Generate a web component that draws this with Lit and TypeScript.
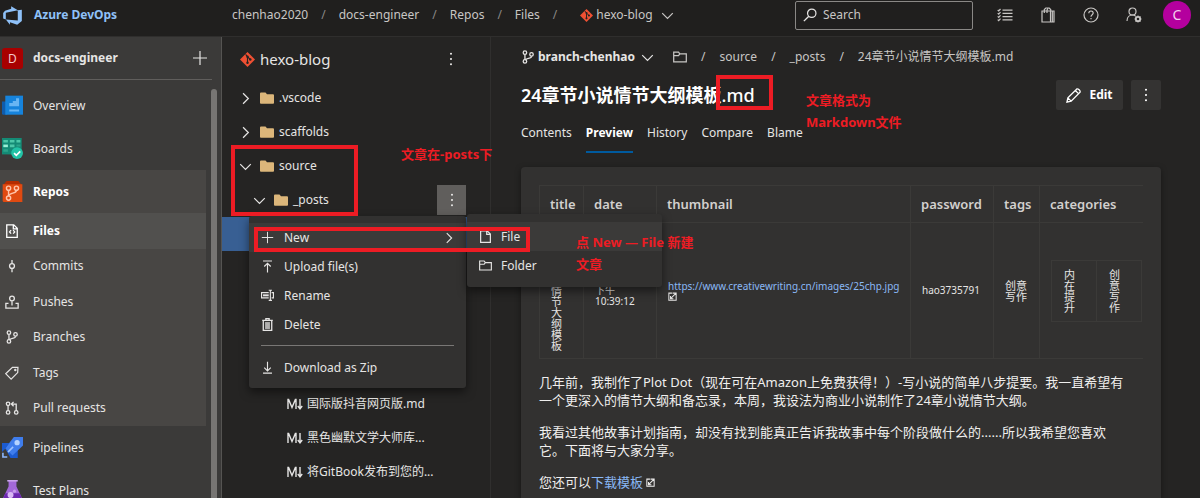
import { LitElement, html, css, svg } from "lit";
import { customElement } from "lit/decorators.js";
import { classMap } from "lit/directives/class-map.js";

const glyphs: Record<string, any> = {
  devops: svg`<path transform="scale(.889)" fill="#8fc1f8" stroke="none" d="M17 4v9.740l-4 3.280-6.200-2.260V17l-3.510-4.590 10.230.8V4.440zM13.590 4.490 7.850 1v2.290L2.580 4.840 1 6.870v4.610l2.260 1V6.570z"/>`,
  plus: svg`<path d="M8 1v14M1 8h14"/>`,
  chevronDown: svg`<path stroke-width="1.5" d="m1.5 5 6.500 6.500L14.500 5"/>`,
  chevronRight: svg`<path stroke-width="1.5" d="M5 1.500 11.500 8 5 14.500"/>`,
  dots: svg`<g fill="currentColor" stroke="none"><circle cx="8" cy="2" r="1.2"/><circle cx="8" cy="8" r="1.2"/><circle cx="8" cy="14" r="1.2"/></g>`,
  git: svg`<path fill="#f05033" stroke="none" d="M8 0 16 8 8 16 0 8z"/><path stroke="#252423" stroke-width="1.2" d="M6 2.5 8 5v6.500M8 5l3 3"/><g fill="#252423" stroke="none"><circle cx="8" cy="5" r="1.3"/><circle cx="8" cy="11.5" r="1.3"/><circle cx="11" cy="8" r="1.3"/></g>`,
  folderFill: svg`<path fill="#dcb67a" stroke="none" d="M1 3.500Q1 2.500 2 2.500h4.500L8 4.300h6q1 0 1 1V13q0 .8-1 .8H2q-1 0-1-.8z"/>`,
  folder: svg`<path stroke-width="1.4" d="M.8 2.500h5.500l1.500 2h7.400v9H.8zM.8 6.500h5.500l1.500-2"/>`,
  search: svg`<circle cx="10" cy="6" r="4.8" stroke-width="1.4"/><path stroke-width="1.6" d="M6.600 9.400 1 15"/>`,
  list: svg`<path d="M5.500 3.200H15.500M5.500 6.400H15.500M5.500 9.600H15.500M5.500 12.800H15.500M.7 3l1 1L3.500 2M.7 6.200l1 1 1.800-2M.7 9.400l1 1 1.800-2M.7 12.600l1 1 1.800-2"/>`,
  bag: svg`<path d="M2 4h8.500v11H2zM10.500 4h3.500v11h-3.500M4.300 6V2.500l1.500-1.500h3.400l1.500 1.500V4M7 6V3l1-1.500M12.300 4v11"/>`,
  help: svg`<circle cx="8" cy="8" r="7"/><path d="M5.800 6.300c0-3 4.400-3 4.400-.2C10.200 7.800 8 7.800 8 9.800M8 11v1.300"/>`,
  userGear: svg`<circle cx="6.500" cy="4.500" r="3.500"/><path d="M1 14c0-4 2.800-6 5.500-6 1.300 0 2.200.3 3 .9"/><circle cx="12" cy="12" r="2.200" stroke-width="1.8"/><path stroke-width="1.1" d="M12 8.500v1M12 14.500v1M8.500 12h1M14.500 12h1M9.500 9.500l.8.8M13.700 13.700l.8.8M9.500 14.500l.8-.8M13.700 10.300l.8-.8"/>`,
  overview: svg`<path fill="#0f5cad" stroke="none" d="M0 5h4v10H1q-1 0-1-1z"/><path fill="#1683dc" stroke="none" d="M2.500.5H16V15H2.500z"/><path fill="#69b5f3" stroke="none" d="M5.500 6h2.700V4.500h2.500V2.500H13v6H5.500zM5.500 11h7.500v1.500H5.500z"/>`,
  boards: svg`<path fill="#148a75" stroke="none" d="M0 0h15v12.500H0z"/><path fill="#4cc7a8" stroke="none" d="M1 1.500h3.500v2H1zM6 1.500h3.500v2H6zM11 1.500h3v2h-3zM6 5h3.500v2H6z"/><path fill="#9af0d6" stroke="none" d="M1 5h3.500v2H1z"/><path fill="#2ba48a" stroke="none" d="M1 8.500h3.500v2H1zM11 5h3v1.500h-3z"/><circle cx="11.500" cy="11.500" r="4.500" fill="#22c3a6" stroke="none"/><path stroke="#fff" stroke-width="1.3" d="m9.200 11.500 1.700 1.700 3-3"/>`,
  repos: svg`<path fill="#b52c00" stroke="none" d="M3.500 0h9L15 3H1z"/><path fill="#e04a11" stroke="none" d="M.5 2.500h15V16H1.500q-1 0-1-1z"/><g stroke="#ffc4aa" stroke-width="1.1"><circle cx="5" cy="5.500" r="1.6"/><circle cx="11" cy="5.500" r="1.6"/><circle cx="5" cy="13" r="1.6"/><path d="M5 7v4.500M11 7c0 3-5 1.500-6 4.500"/></g>`,
  fileCode: svg`<path stroke-width="1.5" d="M2 1h8l4 4v10.200H2zM9.500 1v4.500h4.500M7 7 5.200 9 7 11M9.300 7l1.800 2-1.800 2"/>`,
  commit: svg`<circle cx="8" cy="8" r="2.8" stroke-width="1.5"/><path stroke-width="1.5" d="M8 1v4M8 11v4"/>`,
  push: svg`<circle cx="8" cy="4" r="2.7" stroke-width="1.5"/><path stroke-width="1.5" d="M8 7v5M4 9.500H1v5.500h14v-5.500h-3"/>`,
  branch: svg`<g stroke-width="1.5"><circle cx="4.500" cy="3" r="2"/><circle cx="4.500" cy="13" r="2"/><circle cx="12" cy="5" r="2"/><path d="M4.500 5v6M12 7c0 3-5 2-7 4.200"/></g>`,
  tag: svg`<path stroke-width="1.4" d="M8.500 1.500H14.800L14.500 7.500 7 15 .8 8.800z"/><circle cx="11.800" cy="4.500" r=".8"/>`,
  pull: svg`<g stroke-width="1.5"><circle cx="3.500" cy="3.200" r="2"/><circle cx="3.500" cy="13" r="2"/><circle cx="12.800" cy="13" r="2"/><path d="M3.500 5.200V11M12.800 11V3.500H7.500M9.800 1 7.300 3.500 9.800 6"/></g>`,
  pipelines: svg`<path fill="#1c5bd0" stroke="none" d="M0 4.500h6l6 5.500v6H6.500z"/><path fill="#3f7dec" stroke="none" d="M9 0h7v6.500L8 14 2.500 8.500z"/><path fill="#1c5bd0" stroke="none" d="M0 4.500h5.500L2.500 9 0 11.500z"/><circle cx="11.500" cy="4.300" r="2" fill="#b5d3ff" stroke="none"/><path stroke="#9fc4ff" d="M8.500 7.500 4.500 11.500"/><path stroke="#8db8ff" stroke-width="1.2" d="M.7 12v3.300H4"/>`,
  flask: svg`<path fill="#a368d8" stroke="none" d="M5 0h6v5l5 10.500H0L5 5z"/><path fill="#6d28b0" stroke="none" d="M2.500 10h11l2.500 6H0z"/><path stroke="#c9a3ec" stroke-width="1.2" d="M4 .6h8"/><circle cx="6.500" cy="11.500" r="2.3" fill="#d9b8f5" stroke="none"/><circle cx="9.500" cy="8.500" r="1.2" fill="#c79bec" stroke="none"/>`,
  upload: svg`<path stroke-width="1.4" d="M2.500 1.200h11M8 15.500V4M4 8l4-4 4 4"/>`,
  rename: svg`<path stroke-width="1.4" d="M9.500 4.500H.7v6.500h8.800M13 4.500h2.300v6.500H13M9.500 1.500h4M9.500 14h4M11.500 1.500V14"/><path stroke-width="2.4" d="M2.500 7.800h7"/>`,
  trash: svg`<path stroke-width="1.6" d="M1.500 2.800h13M2.800 3v12.200h10.400V3M6 3V.8h4V3"/><path fill="currentColor" stroke="none" opacity=".7" d="M5 5h6v8.500H5z"/>`,
  download: svg`<path stroke-width="1.4" d="M2.500 15h11M8 .8V12M4 8.200l4 4 4-4"/>`,
  file: svg`<path stroke-width="1.5" d="M2 1h8l4 4v10.200H2zM9.500 1v4.500h4.500"/>`,
  pencil: svg`<path stroke-width="1.4" d="M1 15l1-4.500L11.500 1q1-.5 2.500.9t1 2.600L5.500 14zM10 2.700l3.300 3.300M2 10.500l3.500 3.500"/>`,
  external: svg`<path stroke-width="1.8" d="M7 2H1.500v12.500h13V9M8 2h6.500v7M14 2.500 5 11.500M4.500 7v5h5"/>`,
  markdown: svg`<path stroke-width="1.4" d="M1 13V3.500h.6L5 11.500 8.400 3.500H9V13M13 3v9M10.800 10 13 12.800 15.200 10"/>`,
};

const icon = (name: string, size = 16, cls = "") => html`<svg
  class="icon ${cls}" width=${size} height=${size} viewBox="0 0 16 16" fill="none"
  stroke="currentColor" stroke-width="1.2" aria-hidden="true">${glyphs[name]}</svg>`;

@customElement("app-root")
export class AppRoot extends LitElement {
  static styles = css`
    :host {
      display: block; position: relative; height: 100vh; overflow: hidden;
      background: #252423; color: #e6e5e4;
      font: 12px/18px "Noto Sans", "Noto Sans CJK SC", sans-serif;
    }
    * { box-sizing: border-box; }
    ul, p, h1, h2 { margin: 0; padding: 0; list-style: none; }
    a { color: inherit; text-decoration: none; }
    button { font: inherit; color: inherit; background: none; border: 0; padding: 0; display: flex; align-items: center; justify-content: center; }
    .icon { flex: none; display: block; }
    .shell { display: flex; flex-direction: column; height: 100%; }
    .top { display: flex; align-items: center; height: 37px; padding: 0 9px 6px 0; background: #201f1e; border-bottom: 1px solid #2f2e2d; flex: none; }
    .brand { display: flex; align-items: center; gap: 11px; width: 232px; padding-left: 2px; color: #8fc1f8; font-weight: 700; flex: none; }
    .crumbs { display: flex; align-items: center; gap: 13px; color: #c8c6c4; white-space: nowrap; }
    .sep { color: #8a8886; }
    .path .sep { color: #c8c6c4; }
    .crumbs .repo { display: flex; align-items: center; gap: 3px; margin-left: 10px; }
    .repo .icon:last-child { margin-left: 5px; }
    .search { display: flex; align-items: center; gap: 6px; width: 178px; height: 29px; margin: 0 24px 0 auto; padding: 0 7px; border: 1px solid #8a8886; border-radius: 2px; }
    .search input { flex: 1; min-width: 0; background: none; border: 0; padding: 0; outline: 0; font: inherit; color: #fff; }
    .search input::placeholder { color: #c8c6c4; opacity: 1; }
    .tools { display: flex; align-items: center; gap: 27px; color: #c8c6c4; }
    .avatar { width: 28px; height: 28px; border-radius: 50%; background: #b4009e; color: #f4d0ef; font-size: 14px; margin-left: -6px; }
    .body { display: flex; flex: 1; min-height: 0; }

    .side { width: 222px; flex: none; background: #3b3a39; border-right: 1px solid #555452; overflow: hidden; }
    .project { display: flex; align-items: center; height: 43px; margin-right: 9px; padding: 0 4px 0 2px; border-bottom: 1px solid #605e5c; }
    .badge { width: 21px; height: 21px; border-radius: 3px; background: #a80000; color: #f3c9c9; text-align: center; line-height: 21px; }
    .project h2 { flex: 1; padding-left: 10px; font-size: 12px; }
    .scroller { display: flex; padding: 4px 4px 0 0; gap: 5px; height: 418px; }
    .nav { flex: 1; }
    .thumb { width: 6px; margin-top: 5px; background: #777573; border-radius: 3px 3px 0 0; }
    .hub { display: flex; align-items: center; height: 43px; padding-left: 2px; gap: 10px; }
    .group { background: #484644; }
    .sub { display: flex; flex-direction: column; height: 213px; }
    .sub li { flex: 1; display: flex; }
    .sub a { flex: 1; display: flex; align-items: center; gap: 14px; padding-left: 5px; }
    .on { font-weight: 700; color: #fff; }
    .sub .on { background: #51504e; }

    .tree { width: 269px; flex: none; border-right: 1px solid #302f2e; overflow: hidden; }
    .tree-head { display: flex; align-items: center; gap: 5px; height: 44px; padding: 0 32px 0 18px; }
    .tree-head h2 { flex: 1; font-size: 15px; font-weight: 400; }
    .row { display: flex; align-items: center; height: 34px; padding: 0 24px 0 17px; white-space: nowrap; }
    .row .icon + .icon { margin: 0 4px 0 7px; }
    .row.child { padding-left: 31px; }
    .row.doc { padding-left: 65px; gap: 4px; }
    .row.selected { background: #385f93; }
    .more { width: 29px; height: 30px; margin-left: auto; background: #605e5c; }

    .main { flex: 1; min-width: 0; padding: 10px 39px 0 30px; display: flex; flex-direction: column; }
    .path { display: flex; align-items: center; height: 20px; gap: 14px; color: #c8c6c4; white-space: nowrap; flex: none; }
    .path button { gap: 3px; font-weight: 700; color: #e6e5e4; margin-right: 5px; }
    .path button .icon:last-child { margin-left: 3px; }
    .title { display: flex; align-items: center; height: 30px; margin-top: 13px; flex: none; }
    .title h1 { flex: 1; font-size: 18px; font-weight: 600; line-height: 26px; color: #fff; }
    .title h1 span { font-weight: 500; }
    .btn { height: 30px; background: #343332; border-radius: 2px; font-weight: 700; color: #fff; }
    .edit { width: 67px; gap: 8px; margin-right: 8px; }
    .kebab { width: 30px; }
    .tabs { display: flex; gap: 14px; height: 43px; flex: none; }
    .tabs a { height: 43px; padding-top: 14px; border-bottom: 2px solid transparent; }
    .tabs a.on { border-color: #005a9e; }
    .card { flex: 1; min-height: 0; margin-top: 14px; padding: 18px; background: #323130; border-radius: 4px 4px 0 0; box-shadow: 0 2px 6px #00000066; overflow: hidden; }
    table { border-collapse: collapse; table-layout: fixed; }
    .meta { width: 100%; font-size: 10px; line-height: 11px; }
    .meta th { height: 37px; padding: 0 10px; border: 1px solid #3b3a38; text-align: left; font-size: 13px; font-weight: 600; line-height: 18px; color: #d2d0ce; }
    .meta td { padding: 7px 11px; border: 1px solid #3b3a38; text-align: left; }
    .meta tr > :last-child { border-right-color: transparent; }
    .meta .stack { font-size: 11px; }
    .one { display: block; width: 13px; }
    .two { display: block; width: 22px; }
    .c1 { width: 44px; } .c2 { width: 73px; } .c4 { width: 83px; } .c5 { width: 46px; } .c6 { width: 103px; }
    .meta td.nest { padding: 0 0 0 11px; }
    .inner { width: 100%; }
    .inner td { padding: 8px 12px; font-size: 11px; }
    .meta .inner td:last-child { border-right-color: #3b3a38; }
    .link { color: #8ab8f5; white-space: nowrap; }
    .copy { font-size: 13px; line-height: 18px; color: #f0efee; }
    .copy p { margin-top: 14px; }
    .copy .icon { display: inline-block; }

    .menu { position: absolute; background: #323130; border-radius: 3px; box-shadow: 0 4px 10px #00000080; }
    .menu button { display: flex; justify-content: flex-start; width: 100%; height: 29px; padding: 0 11px 0 12px; gap: 10px; }
    .menu .hot { background: #3b3a39; }
    .menu .hot span { flex: 1; text-align: left; }
    .context { left: 249px; top: 216px; width: 217px; padding: 7px 0 6px; }
    .fly { left: 467px; top: 214px; width: 195px; padding: 8px 0 7px; }
    .menu.fly button { gap: 9px; }
    .rule { border: 0; border-top: 1px solid #797775; margin: 6px 12px 7px; }
    .frame { position: absolute; border: 4px solid #ed1c24; }
    .f1 { left: 231px; top: 145px; width: 127px; height: 71px; }
    .f2 { left: 254px; top: 227px; width: 276px; height: 25px; }
    .f3 { left: 716px; top: 75px; width: 57px; height: 35px; }
    .note { position: absolute; color: #ed1c24; font-weight: 700; font-size: 13px; line-height: 22px; white-space: nowrap; }
    .n1 { left: 401px; top: 143px; }
    .n2 { left: 806px; top: 89px; }
    .n3 { left: 576px; top: 231px; }
  `;

  private subs: [string, string][] = [["fileCode", "Files"], ["commit", "Commits"], ["push", "Pushes"], ["branch", "Branches"], ["tag", "Tags"], ["pull", "Pull requests"]];
  private docs = ["国际版抖音网页版.md", "黑色幽默文学大师库...", "将GitBook发布到您的..."];

  private hub(name: string, label: string, on = false) {
    return html`<a href="#" class=${classMap({ hub: true, on })}>${icon(name, 21)}<span>${label}</span></a>`;
  }

  private folder(label: string, open = false) {
    return html`<li class="row">${icon(open ? "chevronDown" : "chevronRight", 13)}${icon("folderFill", 16)}<span>${label}</span></li>`;
  }

  render() {
    const slash = html`<span class="sep">/</span>`;
    return html`
      <div class="shell">
        <header class="top">
          <a class="brand" href="#">${icon("devops", 21)}<span>Azure DevOps</span></a>
          <nav class="crumbs">
            <a href="#">chenhao2020</a>${slash}<a href="#">docs-engineer</a>${slash}<a href="#">Repos</a>${slash}<a href="#">Files</a>${slash}
            <button class="repo">${icon("git", 13)}<span>hexo-blog</span>${icon("chevronDown", 13)}</button>
          </nav>
          <label class="search">${icon("search", 14)}<input type="text" aria-label="Search" placeholder="Search" /></label>
          <div class="tools">
            ${icon("list")}${icon("bag")}${icon("help")}${icon("userGear")}
            <button class="avatar">C</button>
          </div>
        </header>
        <div class="body">
          <aside class="side">
            <div class="project"><span class="badge">D</span><h2>docs-engineer</h2><button aria-label="Add">${icon("plus")}</button></div>
            <div class="scroller">
              <nav class="nav">
                ${this.hub("overview", "Overview")}${this.hub("boards", "Boards")}
                <div class="group">
                  ${this.hub("repos", "Repos", true)}
                  <ul class="sub">
                    ${this.subs.map(([g, label], i) => html`<li><a href="#" class=${classMap({ on: i === 0 })}>${icon(g, 14)}<span>${label}</span></a></li>`)}
                  </ul>
                </div>
                ${this.hub("pipelines", "Pipelines")}${this.hub("flask", "Test Plans")}
              </nav>
              <div class="thumb"></div>
            </div>
          </aside>
          <section class="tree">
            <div class="tree-head">${icon("git", 15)}<h2>hexo-blog</h2><button aria-label="More">${icon("dots", 14)}</button></div>
            <ul>
              ${this.folder(".vscode")}${this.folder("scaffolds")}${this.folder("source", true)}
              <li class="row child">${icon("chevronDown", 13)}${icon("folderFill", 16)}<span>_posts</span><button class="more" aria-label="More">${icon("dots", 14)}</button></li>
              <li class="row selected"></li>
              ${[0, 1, 2, 3].map(() => html`<li class="row"></li>`)}
              ${this.docs.map((d) => html`<li class="row doc">${icon("markdown", 16)}<span>${d}</span></li>`)}
            </ul>
          </section>
          <main class="main">
            <nav class="path">
              <button>${icon("branch", 14)}<span>branch-chenhao</span>${icon("chevronDown", 13)}</button>
              ${icon("folder", 14)}${slash}<a href="#">source</a>${slash}<a href="#">_posts</a>${slash}<span>24章节小说情节大纲模板.md</span>
            </nav>
            <div class="title">
              <h1>24章节小说情节大纲模板<span>.md</span></h1>
              <button class="btn edit">${icon("pencil", 15)}<span>Edit</span></button>
              <button class="btn kebab" aria-label="More">${icon("dots", 14)}</button>
            </div>
            <nav class="tabs"><a href="#">Contents</a><a href="#" class="on">Preview</a><a href="#">History</a><a href="#">Compare</a><a href="#">Blame</a></nav>
            <article class="card">
              <table class="meta">
                <thead><tr><th class="c1">title</th><th class="c2">date</th><th>thumbnail</th><th class="c4">password</th><th class="c5">tags</th><th class="c6">categories</th></tr></thead>
                <tbody><tr>
                  <td class="stack"><span class="one">24章节小说情节大纲模板</span></td>
                  <td><br />下午<br />10:39:12</td>
                  <td><a class="link" href="#">https://www.creativewriting.cn/images/25chp.jpg</a><br />${icon("external", 9)}</td>
                  <td>hao3735791</td>
                  <td class="stack"><span class="two">创意写作</span></td>
                  <td class="nest"><table class="inner"><tbody><tr><td><span class="one">内在提升</span></td><td><span class="one">创意写作</span></td></tr></tbody></table></td>
                </tr></tbody>
              </table>
              <div class="copy">
                <p>几年前，我制作了Plot Dot（现在可在Amazon上免费获得！）-写小说的简单八步提要。我一直希望有<br />一个更深入的情节大纲和备忘录，本周，我设法为商业小说制作了24章小说情节大纲。</p>
                <p>我看过其他故事计划指南，却没有找到能真正告诉我故事中每个阶段做什么的......所以我希望您喜欢<br />它。下面将与大家分享。</p>
                <p>您还可以<a class="link" href="#">下载模板</a> ${icon("external", 9)}</p>
              </div>
            </article>
          </main>
        </div>
      </div>
      <div class="menu context">
        <button class="hot">${icon("plus", 13)}<span>New</span>${icon("chevronRight", 12)}</button>
        <button>${icon("upload", 13)}<span>Upload file(s)</span></button>
        <button>${icon("rename", 13)}<span>Rename</span></button>
        <button>${icon("trash", 13)}<span>Delete</span></button>
        <hr class="rule" />
        <button>${icon("download", 13)}<span>Download as Zip</span></button>
      </div>
      <div class="menu fly">
        <button class="hot">${icon("file", 13)}<span>File</span></button>
        <button>${icon("folder", 13)}<span>Folder</span></button>
      </div>
      <div class="frame f1"></div><div class="frame f2"></div><div class="frame f3"></div>
      <div class="note n1">文章在-posts下</div>
      <div class="note n2">文章格式为<br />Markdown文件</div>
      <div class="note n3">点 New — File 新建<br />文章</div>
    `;
  }
}
